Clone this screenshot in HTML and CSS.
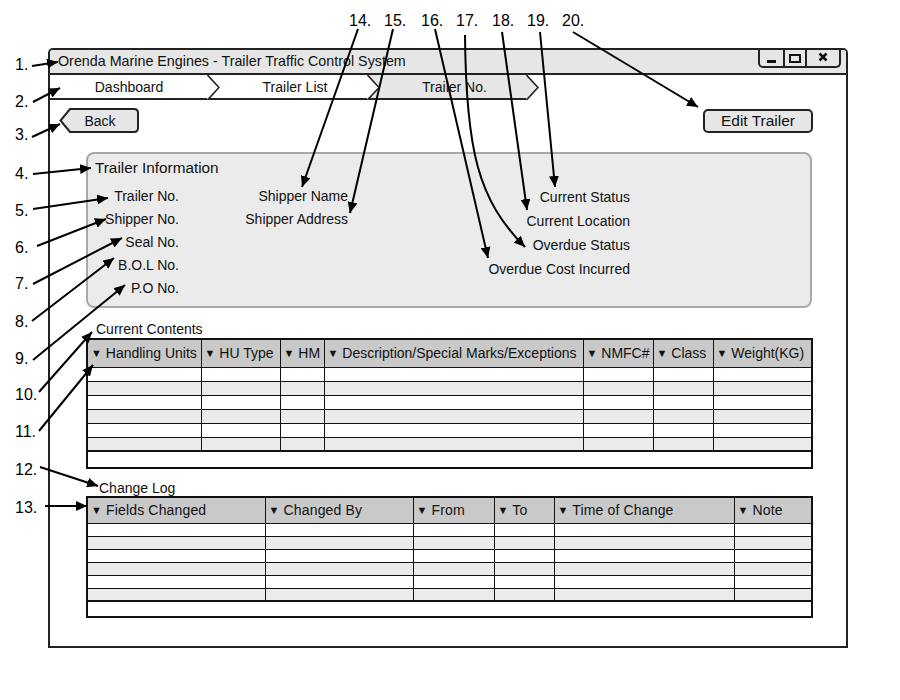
FILE: index.html
```html
<!DOCTYPE html>
<html>
    <head>
        <title>Trailer Traffic Control System</title>
        <link rel="stylesheet" href="styles.css">
    </head>
    <body>
        <div class="window">
            <div class="titlebar">
                <span class="titlebar__text">Orenda Marine Engines - Trailer Traffic Control System</span>
                <div class="winctl">
                    <span class="winctl__btn winctl__btn--min">
                        <svg width="10" height="4" viewBox="0 0 10 4"><rect x="0" y="0" width="9" height="3" fill="#111"/></svg>
                    </span>
                    <span class="winctl__btn winctl__btn--max">
                        <svg width="12" height="9" viewBox="0 0 12 9"><rect x="1" y="1" width="10" height="7" fill="none" stroke="#111" stroke-width="2"/></svg>
                    </span>
                    <span class="winctl__btn winctl__btn--close">
                        <svg width="10" height="10" viewBox="0 0 10 10"><path d="M1.5 1.5 L8.5 8.5 M8.5 1.5 L1.5 8.5" stroke="#111" stroke-width="2.6"/></svg>
                    </span>
                </div>
            </div>

            <div class="crumbs">
                <div class="crumb crumb--first">Dashboard
                    <svg class="crumb__tip" viewBox="0 0 13 25"><path d="M0 0 L12 12.5 L0 25 Z" fill="#fff"/><polyline points="0.5,0 12,12.5 0.5,25" fill="none" stroke="#222" stroke-width="1.6"/></svg>
                </div>
                <div class="crumb crumb--mid">Trailer List
                    <svg class="crumb__tip" viewBox="0 0 13 25"><path d="M0 0 L12 12.5 L0 25 Z" fill="#fff"/><polyline points="0.5,0 12,12.5 0.5,25" fill="none" stroke="#222" stroke-width="1.6"/></svg>
                </div>
                <div class="crumb crumb--current">Trailer No.
                    <svg class="crumb__tip" viewBox="0 0 13 25"><path d="M0 0 L12 12.5 L0 25 Z" fill="#e6e6e6"/><polyline points="0.5,0 12,12.5 0.5,25" fill="none" stroke="#222" stroke-width="1.6"/></svg>
                </div>
            </div>

            <div class="content">
                <div class="toolbar">
                    <button class="btn btn--back">
                        <svg class="btn__shape" viewBox="0 0 80 25"><path d="M11 1 H75 Q79 1 79 5 V20 Q79 24 75 24 H11 L1.5 12.5 Z" fill="#e6e6e6" stroke="#222" stroke-width="2"/></svg>
                        <span class="btn__label">Back</span>
                    </button>
                    <button class="btn btn--edit">Edit Trailer</button>
                </div>

                <div class="info">
                    <h2 class="info__title">Trailer Information</h2>
                    <div class="info__fields">
                        <div class="info__col">
                            <div>Trailer No.</div>
                            <div>Shipper No.</div>
                            <div>Seal No.</div>
                            <div>B.O.L No.</div>
                            <div>P.O No.</div>
                        </div>
                        <div class="info__col">
                            <div>Shipper Name</div>
                            <div>Shipper Address</div>
                        </div>
                        <div class="info__col info__col--status">
                            <div>Current Status</div>
                            <div>Current Location</div>
                            <div>Overdue Status</div>
                            <div>Overdue Cost Incurred</div>
                        </div>
                    </div>
                </div>

                <div class="section-label">Current Contents</div>
                <table class="grid grid--contents">
                    <colgroup>
                        <col style="width:114px"><col style="width:79px"><col style="width:44px"><col style="width:259px"><col style="width:70px"><col style="width:60px"><col style="width:99px">
                    </colgroup>
                    <thead>
                        <tr>
                            <th><span class="sort">▼</span> Handling Units</th>
                            <th><span class="sort">▼</span> HU Type</th>
                            <th><span class="sort">▼</span> HM</th>
                            <th><span class="sort">▼</span> Description/Special Marks/Exceptions</th>
                            <th><span class="sort">▼</span> NMFC#</th>
                            <th><span class="sort">▼</span> Class</th>
                            <th><span class="sort">▼</span> Weight(KG)</th>
                        </tr>
                    </thead>
                    <tbody>
                        <tr><td></td><td></td><td></td><td></td><td></td><td></td><td></td></tr>
                        <tr class="alt"><td></td><td></td><td></td><td></td><td></td><td></td><td></td></tr>
                        <tr><td></td><td></td><td></td><td></td><td></td><td></td><td></td></tr>
                        <tr class="alt"><td></td><td></td><td></td><td></td><td></td><td></td><td></td></tr>
                        <tr><td></td><td></td><td></td><td></td><td></td><td></td><td></td></tr>
                        <tr class="alt"><td></td><td></td><td></td><td></td><td></td><td></td><td></td></tr>
                        <tr class="foot"><td colspan="7"></td></tr>
                    </tbody>
                </table>

                <div class="section-label section-label--log">Change Log</div>
                <table class="grid grid--log">
                    <colgroup>
                        <col style="width:178px"><col style="width:148px"><col style="width:81px"><col style="width:60px"><col style="width:180px"><col style="width:78px">
                    </colgroup>
                    <thead>
                        <tr>
                            <th><span class="sort">▼</span> Fields Changed</th>
                            <th><span class="sort">▼</span> Changed By</th>
                            <th><span class="sort">▼</span> From</th>
                            <th><span class="sort">▼</span> To</th>
                            <th><span class="sort">▼</span> Time of Change</th>
                            <th><span class="sort">▼</span> Note</th>
                        </tr>
                    </thead>
                    <tbody>
                        <tr><td></td><td></td><td></td><td></td><td></td><td></td></tr>
                        <tr class="alt"><td></td><td></td><td></td><td></td><td></td><td></td></tr>
                        <tr><td></td><td></td><td></td><td></td><td></td><td></td></tr>
                        <tr class="alt"><td></td><td></td><td></td><td></td><td></td><td></td></tr>
                        <tr><td></td><td></td><td></td><td></td><td></td><td></td></tr>
                        <tr class="alt"><td></td><td></td><td></td><td></td><td></td><td></td></tr>
                        <tr class="foot"><td colspan="6"></td></tr>
                    </tbody>
                </table>
            </div>
        </div>

        <!-- numbered callouts drawn over the wireframe -->
        <svg class="notes" width="900" height="700" viewBox="0 0 900 700">
            <defs>
                <marker id="head" markerWidth="12" markerHeight="10" refX="11" refY="5" orient="auto" markerUnits="userSpaceOnUse">
                    <path d="M0 0 L11 5 L0 10 Z" fill="#000"/>
                </marker>
            </defs>
            <g class="notes__num">
                <text x="15" y="70">1.</text>
                <text x="15" y="107">2.</text>
                <text x="15" y="140">3.</text>
                <text x="15" y="179">4.</text>
                <text x="15" y="216">5.</text>
                <text x="15" y="253">6.</text>
                <text x="15" y="289">7.</text>
                <text x="15" y="327">8.</text>
                <text x="15" y="364">9.</text>
                <text x="15" y="400">10.</text>
                <text x="15" y="437">11.</text>
                <text x="15" y="475">12.</text>
                <text x="15" y="513">13.</text>
                <text x="349" y="26">14.</text>
                <text x="384" y="26">15.</text>
                <text x="421" y="26">16.</text>
                <text x="456" y="26">17.</text>
                <text x="492" y="26">18.</text>
                <text x="527" y="26">19.</text>
                <text x="562" y="26">20.</text>
            </g>
            <g class="notes__arrows" stroke="#000" stroke-width="2" fill="none" marker-end="url(#head)">
                <line x1="32" y1="66" x2="58" y2="62"/>
                <line x1="33" y1="102" x2="60" y2="88"/>
                <line x1="32" y1="137" x2="60" y2="124"/>
                <line x1="33" y1="174" x2="91" y2="168"/>
                <line x1="33" y1="209" x2="108" y2="198"/>
                <line x1="37" y1="246" x2="106" y2="219"/>
                <line x1="33" y1="284" x2="122" y2="238"/>
                <line x1="32" y1="321" x2="114" y2="258"/>
                <line x1="33" y1="360" x2="125" y2="285"/>
                <line x1="39" y1="392" x2="92" y2="332"/>
                <line x1="39" y1="431" x2="93" y2="365"/>
                <line x1="40" y1="467" x2="98" y2="486"/>
                <line x1="45" y1="506" x2="87" y2="506"/>
                <line x1="358" y1="29" x2="302" y2="187"/>
                <line x1="393" y1="29" x2="350" y2="213"/>
                <line x1="435" y1="29" x2="488" y2="258"/>
                <path d="M465 35 C 466 150, 478 200, 525 247"/>
                <line x1="502" y1="32" x2="527" y2="210"/>
                <line x1="540" y1="32" x2="555" y2="187"/>
                <line x1="573" y1="32" x2="698" y2="107"/>
            </g>
        </svg>
    </body>
</html>
```

FILE: styles.css
```css
* {
  box-sizing: border-box;
  margin: 0;
  padding: 0;
}

body {
  position: relative;
  width: 900px;
  height: 700px;
  font-family: "Liberation Sans", Arial, sans-serif;
  color: #111;
  background-color: #fff;
}

.window {
  margin: 48px 0 0 48px;
  width: 800px;
  height: 600px;
  border: 2px solid #222;
  border-radius: 5px 5px 0 0;
}

/* title bar */

.titlebar {
  display: flex;
  justify-content: space-between;
  align-items: flex-start;
  height: 25px;
  background-color: #e6e6e6;
  border-bottom: 2px solid #222;
  border-radius: 3px 3px 0 0;
}

.titlebar__text {
  font-size: 14.3px;
  line-height: 23px;
  padding-left: 8px;
}

.winctl {
  display: flex;
  height: 18px;
  margin-right: 5px;
  border: 2px solid #222;
  border-top: none;
  border-radius: 0 0 5px 5px;
}

.winctl__btn {
  display: flex;
  align-items: center;
  justify-content: center;
}

.winctl__btn--min {
  width: 23px;
  align-items: flex-end;
  padding-bottom: 2px;
}

.winctl__btn--max {
  width: 22px;
  border-left: 2px solid #222;
}

.winctl__btn--close {
  width: 34px;
  border-left: 2px solid #222;
  padding-bottom: 2px;
}

/* breadcrumb tabs */

.crumbs {
  display: flex;
  height: 25px;
}

.crumb {
  position: relative;
  border-bottom: 2px solid #222;
  font-size: 14px;
  line-height: 24px;
  text-align: center;
  background-color: #fff;
}

.crumb--first {
  width: 158px;
}

.crumb--mid {
  width: 160px;
  padding-left: 14px;
}

.crumb--current {
  width: 159px;
  padding-left: 14px;
  background-color: #e6e6e6;
}

.crumb__tip {
  position: absolute;
  top: 0;
  right: -12px;
  width: 13px;
  height: 25px;
  z-index: 1;
}

/* page body */

.content {
  padding: 8px 34px 0 36px;
}

.toolbar {
  display: flex;
  justify-content: space-between;
  align-items: flex-start;
  height: 25px;
}

.btn {
  font: inherit;
  color: #111;
  cursor: pointer;
}

.btn--back {
  position: relative;
  width: 80px;
  height: 25px;
  margin-left: -27px;
  border: none;
  background: none;
  font-size: 14px;
}

.btn__shape {
  position: absolute;
  top: 0;
  left: 0;
  width: 80px;
  height: 25px;
}

.btn__label {
  position: relative;
  padding-left: 2px;
}

.btn--edit {
  width: 110px;
  height: 24px;
  margin-top: 1px;
  margin-right: -1px;
  border: 2px solid #222;
  border-radius: 5px;
  background-color: #e6e6e6;
  font-size: 15.5px;
  line-height: 20px;
}

.info {
  margin-top: 19px;
  height: 156px;
  padding: 4px 0 0 7px;
  border: 2px solid #a8a8a8;
  border-radius: 8px;
  background-color: #ebebeb;
}

.info__title {
  font-size: 15.3px;
  font-weight: normal;
  line-height: 20px;
}

.info__fields {
  display: grid;
  grid-template-columns: 84px 169px 282px;
  margin-top: 7px;
  font-size: 14px;
}

.info__col {
  text-align: right;
  line-height: 23px;
}

.info__col--status {
  line-height: 24px;
}

.section-label {
  margin: 13px 0 1px;
  padding-left: 10px;
  font-size: 14px;
  line-height: 16px;
}

.section-label--log {
  margin: 11px 0 0;
  padding-left: 13px;
}

/* data grids */

.grid {
  width: 725px;
  border-collapse: collapse;
  table-layout: fixed;
  border: 2px solid #111;
}

.grid th {
  height: 28px;
  padding: 0 0 0 3px;
  border: 1px solid #111;
  background-color: #c9c9c9;
  font-size: 14px;
  font-weight: normal;
  text-align: left;
  white-space: nowrap;
  overflow: hidden;
}

.grid--log th {
  height: 26px;
  letter-spacing: 0.15px;
}

.grid td {
  height: 14px;
  padding: 0;
  border: 1px solid #111;
}

.grid--log td {
  height: 13px;
}

.grid tr.alt td {
  background-color: #ebebeb;
}

.grid tr.foot td {
  height: 17px;
  border-top: 2px solid #111;
}

.grid--log tr.foot td {
  height: 16px;
}

.sort {
  font-size: 11px;
  vertical-align: 1px;
}

/* callouts */

.notes {
  position: absolute;
  top: 0;
  left: 0;
  pointer-events: none;
}

.notes__num {
  font-family: "Liberation Sans", Arial, sans-serif;
  font-size: 16px;
  fill: #000;
}
```
